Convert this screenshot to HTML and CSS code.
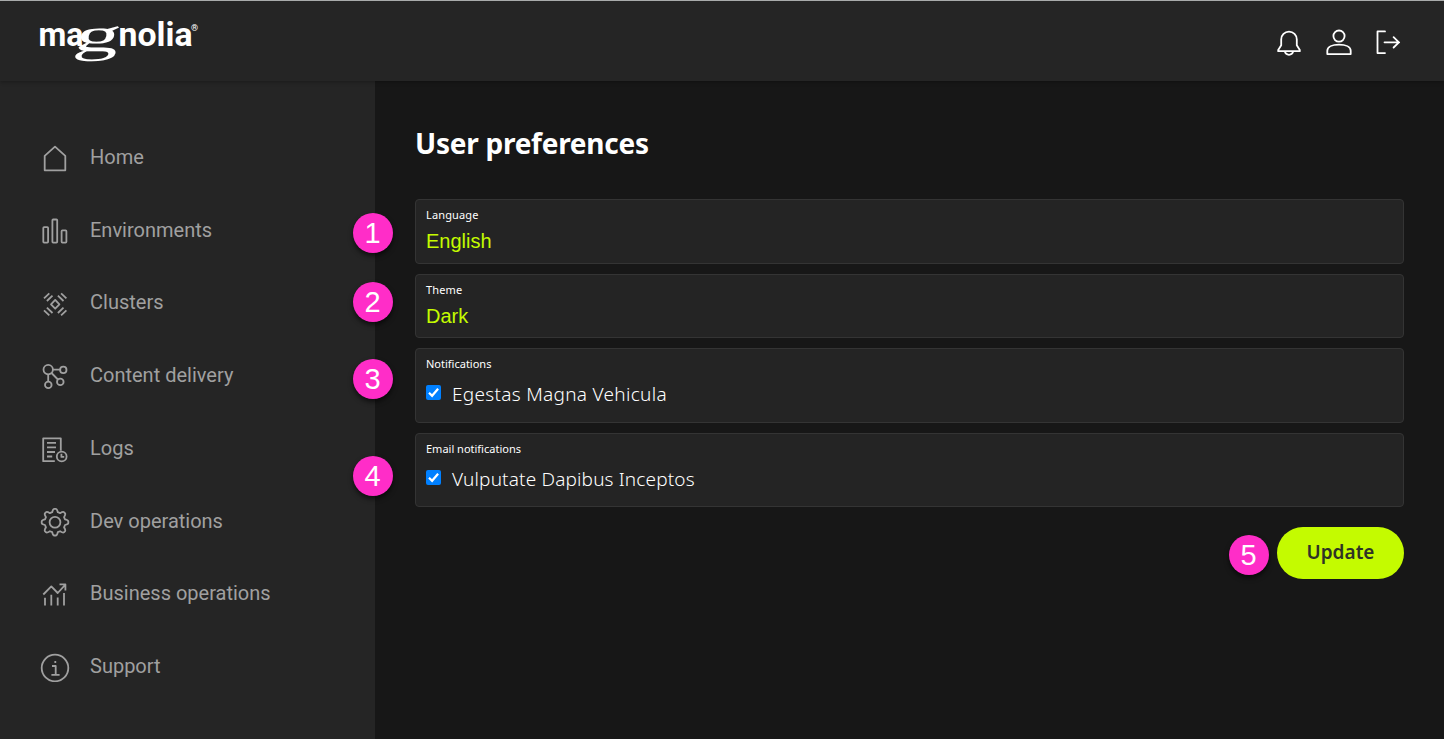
FILE: index.html
```html
<!DOCTYPE html>
<html lang="en">
<head>
<meta charset="utf-8">
<title>User preferences</title>
<link rel="stylesheet" href="styles.css">
</head>
<body>
<header class="topbar">
  <svg class="logo" width="160" height="44" viewBox="0 0 160 44" role="img" aria-label="magnolia">
    <text class="logo-sans" x="-1.5" y="27" textLength="45" lengthAdjust="spacingAndGlyphs">ma</text>
    <text class="logo-g" transform="translate(32.5 31.5) skewX(-12) scale(1.88 1)" x="0" y="0">g</text>
    <text class="logo-sans" x="78.5" y="27" textLength="74" lengthAdjust="spacingAndGlyphs">nolia</text>
    <text class="logo-reg" x="151" y="11.5">®</text>
  </svg>
  <div class="actions">
    <svg class="action" width="30" height="30" viewBox="0 0 30 30"><path d="M4.2 23.2V22l3-4.8v-5.7a7.8 7.8 0 0 1 15.6 0v5.7l3 4.8v1.2zM10.8 23.4a4.3 4.3 0 0 0 8.4 0"/></svg>
    <svg class="action" width="30" height="30" viewBox="0 0 30 30"><circle cx="15" cy="8.1" r="5.6"/><path d="M3.3 26.1v-3.3c0-4 5-6.2 11.7-6.2s11.7 2.2 11.7 6.2v3.3z"/></svg>
    <svg class="action" width="30" height="30" viewBox="0 0 30 30"><path d="M11 3.4H3.5v21.7H11M10.5 14.3h14.7M19.6 9.1l5.3 5.2-5.3 5.2"/></svg>
  </div>
</header>
<div class="layout">
  <nav class="sidebar">
    <a class="item"><svg class="icon" viewBox="0 0 30 30"><path d="M4.7 12.9 15 3.7l10.3 9.2v14.4H4.7z"/></svg><span>Home</span></a>
    <a class="item"><svg class="icon" viewBox="0 0 30 30"><rect x="3.3" y="11.2" width="4.8" height="15.4" rx=".8"/><rect x="12.4" y="3.5" width="4.8" height="23.1" rx=".8"/><rect x="21.6" y="14.4" width="4.8" height="12.2" rx=".8"/></svg><span>Environments</span></a>
    <a class="item"><svg class="icon" viewBox="0 0 30 30"><path d="M15.2 10.9l4.2 4.4-4.2 4.4-4.2-4.4zM4 9.3l5.3-5M6.9 12l5.6-5.4M26.4 9.3l-5.3-5M23.5 12l-5.6-5.4M4 21.3l5.3 5M6.9 18.6l5.6 5.4M26.4 21.3l-5.3 5M23.5 18.6L17.9 24"/></svg><span class="raised">Clusters</span></a>
    <a class="item"><svg class="icon" viewBox="0 0 30 30"><circle cx="8.2" cy="8.6" r="4.7"/><circle cx="23.3" cy="8.9" r="3.2"/><circle cx="20.3" cy="20.9" r="3.3"/><circle cx="8.3" cy="23.9" r="3.3"/><path d="M12.9 8.7h7.2M8.2 13.3v7.3M11.5 12l6.4 6.5"/></svg><span>Content delivery</span></a>
    <a class="item"><svg class="icon" viewBox="0 0 30 30"><path d="M14.8 27.2H3.2V4.3h17.6v12.4M7 8.9h9M7 13.4h9M7 18h8M7 22.5h5.2"/><circle cx="21.7" cy="22.5" r="4.9"/><path d="M21.4 19.7v3.2h2.8"/></svg><span>Logs</span></a>
    <a class="item"><svg class="icon" viewBox="0 0 30 30"><g transform="translate(15 15.2)"><path d="M-2.8-10Q-2-13.3-.8-13.3H.8Q2-13.3 2.8-10L5.1-9.05Q8-10.8 8.9-10.1L10.1-8.9Q10.8-8 9.05-5.1L10-2.8Q13.3-2 13.3-.8V.8Q13.3 2 10 2.8L9.05 5.1Q10.8 8 10.1 8.9L8.9 10.1Q8 10.8 5.1 9.05L2.8 10Q2 13.3.8 13.3H-.8Q-2 13.3-2.8 10L-5.1 9.05Q-8 10.8-8.9 10.1L-10.1 8.9Q-10.8 8-9.05 5.1L-10 2.8Q-13.3 2-13.3.8V-.8Q-13.3-2-10-2.8L-9.05-5.1Q-10.8-8-10.1-8.9L-8.9-10.1Q-8-10.8-5.1-9.05Z"/><circle r="5.4"/></g></svg><span>Dev operations</span></a>
    <a class="item"><svg class="icon" viewBox="0 0 30 30"><path d="M3.3 15.5l8-8.1 6.4 6.6 7.7-8.3M19.5 5.4h5.9v6M5 18.8v7.7M11.3 15.8v10.7M17.7 18.5v8M24 14v12.5"/></svg><span>Business operations</span></a>
    <a class="item"><svg class="icon" viewBox="0 0 30 30"><circle cx="15" cy="16" r="13.3"/><path d="M12 14h3.7v8.8M11.4 22.8h8.2M14.4 10h1.8"/></svg><span>Support</span></a>
  </nav>
  <main class="content">
    <h1 class="title">User preferences</h1>
    <form class="form">
      <div class="field select"><span class="label label-short">Language</span><span class="value">English</span></div>
      <div class="field select"><span class="label label-short">Theme</span><span class="value">Dark</span></div>
      <div class="field checks"><span class="label">Notifications</span>
        <div class="check"><svg class="box" viewBox="0 0 15 15"><path d="M3 7.7l3.1 3.1 6-7"/></svg><span class="check-text check-first">Egestas Magna Vehicula</span></div></div>
      <div class="field checks"><span class="label">Email notifications</span>
        <div class="check"><svg class="box" viewBox="0 0 15 15"><path d="M3 7.7l3.1 3.1 6-7"/></svg><span class="check-text check-second">Vulputate Dapibus Inceptos</span></div></div>
      <button class="update" type="button">Update</button>
    </form>
  </main>
</div>
<span class="callout c1">1</span>
<span class="callout c2">2</span>
<span class="callout c3">3</span>
<span class="callout c4">4</span>
<span class="callout c5">5</span>
</body>
</html>
```

FILE: styles.css
```css
* { box-sizing: border-box; }
body {
  position: relative;
  display: flex;
  flex-direction: column;
  height: 739px;
  margin: 0;
  overflow: hidden;
  background: #171717;
  color: #fff;
  font-family: "Noto Sans", sans-serif;
}
.topbar {
  display: flex;
  flex: none;
  justify-content: space-between;
  align-items: flex-start;
  height: 81px;
  padding: 18px 40px 0 40px;
  border-top: 1px solid #a9abab;
  background: #252525;
  box-shadow: 0 1px 4px rgba(0, 0, 0, .3);
  z-index: 1;
}
.logo { overflow: visible; fill: #fff; }
.logo-sans { font: 700 34px Roboto, sans-serif; }
.logo-g { font: 400 48px "Liberation Serif", serif; }
.logo-reg { font: 700 9px Roboto, sans-serif; }
.actions { display: flex; gap: 20px; padding-top: 9px; }
.action, .icon { fill: none; stroke-linejoin: round; stroke-linecap: round; }
.action { stroke: #fff; stroke-width: 1.8; }
.layout { display: flex; flex: 1; min-height: 0; }
.sidebar {
  flex: none;
  width: 375px;
  padding: 40.8px 40px 0;
  background: #252525;
}
.item {
  display: flex;
  align-items: center;
  gap: 20px;
  height: 72.7px;
  color: #a0a0a0;
  font: 400 20px Roboto, sans-serif;
}
.item span { padding-bottom: 2px; }
.item .raised { padding-bottom: 4px; }
.icon { width: 30px; height: 30px; stroke: #a0a0a0; stroke-width: 1.8; stroke-linecap: butt; }
.content { flex: 1; padding: 39px 40px 0; }
.title { margin: 0 0 33px; font-size: 28px; line-height: 46px; font-weight: 700; letter-spacing: -.25px; }
.form { display: flex; flex-direction: column; gap: 10px; }
.field {
  display: flex;
  flex-direction: column;
  align-items: flex-start;
  padding: 7px 10px 0;
  border: 1px solid #343434;
  border-radius: 4px;
  background: #242424;
}
.select { height: 64.5px; }
.checks { height: 74.5px; }
.label { font-size: 11px; line-height: 16px; }
.label-short { letter-spacing: .15px; }
.value { margin-top: 5px; color: #c4fb00; font: 400 20px/26px "Liberation Sans", sans-serif; }
.check { display: flex; gap: 11px; align-items: center; margin-top: 8px; }
.box {
  width: 15px;
  height: 15px;
  margin-top: -3px;
  border-radius: 2px;
  background: #0080ff;
  fill: none;
  stroke: #fff;
  stroke-width: 2.2;
}
.check-text { font-size: 19px; line-height: 28px; font-weight: 300; }
.check-first { letter-spacing: .3px; }
.check-second { letter-spacing: .16px; }
.update {
  align-self: flex-end;
  width: 127px;
  height: 52px;
  margin-top: 10px;
  padding: 0 0 2px;
  border: 0;
  border-radius: 26px;
  background: #c4fb00;
  color: #2f3326;
  font: 600 19px "Noto Sans", sans-serif;
}
.callout {
  position: absolute;
  left: 353px;
  z-index: 2;
  width: 40px;
  height: 40px;
  padding-right: 1px;
  border-radius: 50%;
  background: #ff2dc8;
  box-shadow: 0 3px 5px rgba(0, 0, 0, .6);
  color: #fff;
  font: 400 29px/41px "Liberation Sans", sans-serif;
  text-align: center;
}
.c1 { top: 213px; }
.c2 { top: 282px; }
.c3 { top: 359px; }
.c4 { top: 456px; }
.c5 { top: 535px; left: 1229px; }
```
